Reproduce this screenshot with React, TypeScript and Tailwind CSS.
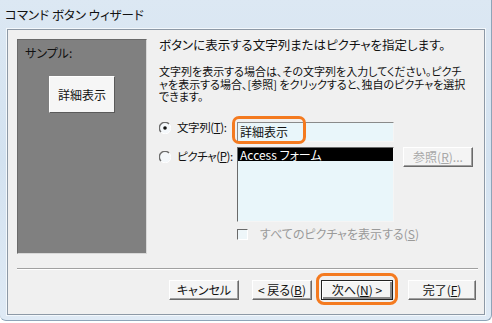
import React from 'react';

const jp = "font-['Noto_Sans_CJK_JP','Noto_Sans',sans-serif] [font-feature-settings:'palt']";

function Radio({ checked }: { checked?: boolean }) {
  return (
    <svg width="12" height="12" viewBox="0 0 12 12" className="shrink-0">
      <circle cx="6" cy="6" r="5.5" fill="#f4f8fb" />
      <path d="M10 2 A5.5 5.5 0 0 0 2 10" stroke="#6d6d6d" strokeWidth="1.4" fill="none" />
      <path d="M10.2 2.2 A5.5 5.5 0 0 1 2.2 10.2" stroke="#ffffff" strokeWidth="1" fill="none" />
      {checked && <circle cx="6" cy="6" r="1.8" fill="#111" />}
    </svg>
  );
}

function Btn({ children, w, disabled }: { children: React.ReactNode; w: string; disabled?: boolean }) {
  return (
    <div
      className={`${w} h-[20px] flex items-center justify-center bg-[#f4f4f4] border border-t-white border-l-white border-r-[#6a6a6a] border-b-[#6a6a6a] shadow-[inset_-1px_-1px_0_#a0a0a0] text-[12px] leading-none ${
        disabled ? 'text-[#a8a8a8]' : 'text-[#111]'
      }`}
    >
      {children}
    </div>
  );
}

export default function App() {
  return (
    <div className={`w-[492px] h-[323px] overflow-hidden bg-white ${jp}`}>
      <div className="w-[492px] h-[321px] rounded-b-[6px] bg-linear-to-b from-[#dce8f3] via-[#d3e2f0] to-[#dfeaf5] border-r border-b border-[#8ea4b8] flex flex-col">
        <div className="h-[29px] pl-[5px] pt-[6px] text-[12.5px] leading-[18px] text-[#111] whitespace-nowrap">
          コマンド ボタン ウィザード
        </div>
        <div className="ml-[7px] w-[478px] h-[286px] border border-[#8d99a6] bg-[#f0f0f0] shadow-[0_0_0_1px_#f3f8fc] flex flex-col">
          <div className="flex pl-[9px] pt-[9px]">
            <div className="shrink-0 w-[130px] h-[215px] bg-[#808080] border border-t-[#6a6a6a] border-l-[#6a6a6a] border-r-[#d8d8d8] border-b-[#d8d8d8] flex flex-col">
              <div className="pl-[7px] pt-[5px] text-[12px] leading-[16px] text-[#111]">サンプル:</div>
              <div className="ml-[31px] mt-[15px] w-[66px] h-[37px] bg-[#f6f6f6] border border-t-white border-l-white border-r-[#5a5a5a] border-b-[#5a5a5a] flex items-center justify-center text-[12px] text-[#111]">
                詳細表示
              </div>
            </div>

            <div className="ml-[12px] flex flex-col text-[12px] text-[#111]">
              <div className="-mt-[1px] leading-[14px] text-[12.5px] whitespace-nowrap">
                ボタンに表示する文字列またはピクチャを指定します。
              </div>
              <div className="mt-[13px] leading-[12.5px] text-[11px] whitespace-nowrap">
                <div>文字列を表示する場合は、その文字列を入力してください。ピクチ</div>
                <div>ャを表示する場合、[参照] をクリックすると、独自のピクチャを選択</div>
                <div>できます。</div>
              </div>

              <div className="mt-[14.5px] flex">
                <div className="w-[78px] flex flex-col text-[11.5px] tracking-[-0.4px]">
                  <div className="h-[20px] flex items-center gap-[6px] mt-[1px]">
                    <Radio checked />
                    <span className="whitespace-nowrap">
                      文字列(<span className="underline">T</span>):
                    </span>
                  </div>
                  <div className="h-[20px] flex items-center gap-[6px] mt-[9px]">
                    <Radio />
                    <span className="whitespace-nowrap">
                      ピクチャ(<span className="underline">P</span>):
                    </span>
                  </div>
                </div>

                <div className="flex flex-col">
                  <div className="relative w-[157px] h-[20px] bg-[#e9f6fa] border border-t-[#8a8a8a] border-l-[#8a8a8a] border-r-[#f5f5f5] border-b-[#f5f5f5] flex items-center pl-[2px] mt-[5px]">
                    詳細表示
                    <div className="absolute left-[-6px] top-[-7px] w-[74px] h-[28px] rounded-[7px] border-[3px] border-[#f47a1f]" />
                  </div>
                  <div className="flex mt-[5px]">
                    <div className="w-[157px] h-[75px] bg-[#e9f6fa] border border-t-[#6a6a6a] border-l-[#6a6a6a] border-r-[#f5f5f5] border-b-[#f5f5f5]">
                      <div className="h-[13px] bg-black text-white leading-[13px] pl-[2px] text-[12px]">Access フォーム</div>
                    </div>
                    <div className="ml-[9px]">
                      <Btn w="w-[70px]" disabled>
                        参照(<span className="underline">R</span>)...
                      </Btn>
                    </div>
                  </div>
                  <div className="mt-[5px] flex items-center gap-[12px] text-[#9a9a9a]">
                    <div className="w-[11px] h-[11px] bg-[#eef6f9] border border-t-[#6a6a6a] border-l-[#6a6a6a] border-r-white border-b-white" />
                    <span className="whitespace-nowrap leading-[14px]">
                      すべてのピクチャを表示する(<span className="underline">S</span>)
                    </span>
                  </div>
                </div>
              </div>
            </div>
          </div>

          <div className="ml-[9px] mt-[14px] w-[461px] h-[2px] border-t border-[#a0a0a0] border-b border-b-white" />

          <div className="flex mt-[10px] pl-[161px]">
            <Btn w="w-[70px]">キャンセル</Btn>
            <div className="ml-[13px]">
              <Btn w="w-[60px]">
                &lt; 戻る(<span className="underline">B</span>)
              </Btn>
            </div>
            <div className="relative ml-[9px]">
              <div className="absolute left-[-5px] top-[-7px] w-[82px] h-[32px] rounded-[8px] border-[3px] border-[#f47a1f]" />
              <div className="w-[72px] h-[20px] flex items-center justify-center bg-[#f4f4f4] border border-[#222] shadow-[inset_1px_1px_0_#fff,inset_-2px_-2px_0_#8a8a8a] text-[12px] text-[#111]">
                次へ(<span className="underline">N</span>) &gt;
              </div>
            </div>
            <div className="ml-[15px]">
              <Btn w="w-[68px]">
                完了(<span className="underline">F</span>)
              </Btn>
            </div>
          </div>
        </div>
      </div>
    </div>
  );
}
